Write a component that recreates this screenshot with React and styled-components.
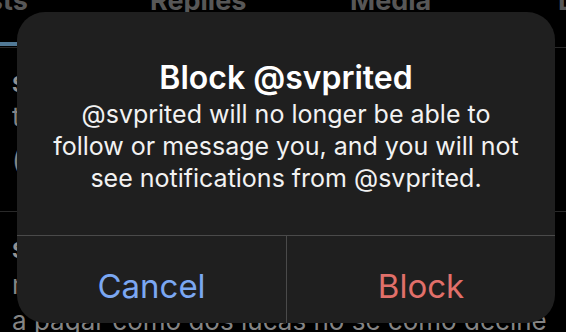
import styled, {createGlobalStyle} from "styled-components";

const GlobalStyle = createGlobalStyle`
    html, body {
        margin: 0;
        padding: 0;
        background: #000;
    }
    body {
        width: 566px;
        height: 332px;
        overflow: hidden;
        font-family: "Inter", "Noto Sans", sans-serif;
        -webkit-font-smoothing: antialiased;
    }
`;

const Screen = styled.div`
    position: relative;
    width: 566px;
    height: 332px;
    overflow: hidden;
    background: #000;
`;

const TabBar = styled.div`
    display: flex;
    align-items: flex-start;
    margin-top: -14px;
    margin-left: -46px;
    height: 61px;
    border-bottom: 1px solid #2c2c2c;
`;

const Tab = styled.div`
    display: flex;
    flex-direction: column;
    justify-content: space-between;
    flex: 0 0 ${(p) => p.$w}px;
    height: 100%;
    font-size: 27px;
    font-weight: 700;
    line-height: 30px;
    color: #5c5c5c;
`;

const Indicator = styled.div`
    width: 70px;
    height: 4px;
    margin-bottom: 1px;
    border-radius: 2px;
    background: #56809f;
`;

const Row = styled.div`
    height: ${(p) => p.$h}px;
    padding: ${(p) => p.$top}px 12px 0;
    border-bottom: 1px solid ${(p) => (p.$last ? "transparent" : "#2c2c2c")};
    box-sizing: border-box;
`;

const Name = styled.div`
    font-size: 22px;
    font-weight: 700;
    line-height: 30px;
    color: #9a9a9a;
    white-space: nowrap;
`;

const Line = styled.div`
    margin-top: ${(p) => p.$gap || 0}px;
    font-size: 26px;
    line-height: 36px;
    color: #8c8c8c;
    white-space: nowrap;
    overflow: hidden;
`;

const Backdrop = styled.div`
    position: absolute;
    inset: 0;
    background: rgba(0, 0, 0, 0.05);
`;

const Alert = styled.div`
    position: absolute;
    left: 17px;
    top: 12px;
    width: 538px;
    height: 311px;
    display: flex;
    flex-direction: column;
    border-radius: 28px;
    background: #1f1f1f;
    overflow: hidden;
`;

const Content = styled.div`
    flex: 1;
    padding-top: 48px;
    text-align: center;
    color: #fff;
    border-bottom: 1px solid #4a4a4a;
`;

const Title = styled.div`
    font-size: 32px;
    font-weight: 600;
    line-height: 36px;
`;

const Message = styled.div`
    margin-top: 2px;
    font-size: 25px;
    line-height: 32px;
    color: #f2f2f2;
`;

const Actions = styled.div`
    display: grid;
    grid-template-columns: 1fr 1fr;
    height: 87px;
`;

const Action = styled.button`
    all: unset;
    display: flex;
    justify-content: center;
    padding-top: 30px;
    box-sizing: border-box;
    font-family: "Inter", "Noto Sans", sans-serif;
    font-size: 33px;
    line-height: 40px;
    color: ${(p) => (p.$danger ? "#e1706a" : "#7ba7f2")};

    & + & {
        border-left: 1px solid #4a4a4a;
    }
`;

export default function App() {
    return (
        <>
            <GlobalStyle />
            <Screen>
                <TabBar>
                    <Tab $w={196}>
                        <span>Posts</span>
                        <Indicator />
                    </Tab>
                    <Tab $w={200}>Replies</Tab>
                    <Tab $w={208}>Media</Tab>
                    <Tab $w={120}>Likes</Tab>
                </TabBar>
                <Row $h={164} $top={21}>
                    <Name>Sofía Prieto</Name>
                    <Line>tremendo día para quedarse en casa</Line>
                    <Line $gap={7}>(no me pregunten por qué)</Line>
                </Row>
                <Row $h={140} $top={23} $last>
                    <Name>Santiago Vera</Name>
                    <Line $gap={2}>me dijeron que la entrada sale barata, que e</Line>
                    <Line>a pagar como dos lucas no se como decine</Line>
                </Row>
                <Backdrop />
                <Alert role="alertdialog">
                    <Content>
                        <Title>Block @svprited</Title>
                        <Message>
                            @svprited will no longer be able to
                            <br />
                            follow or message you, and you will not
                            <br />
                            see notifications from @svprited.
                        </Message>
                    </Content>
                    <Actions>
                        <Action>Cancel</Action>
                        <Action $danger>Block</Action>
                    </Actions>
                </Alert>
            </Screen>
        </>
    );
}
